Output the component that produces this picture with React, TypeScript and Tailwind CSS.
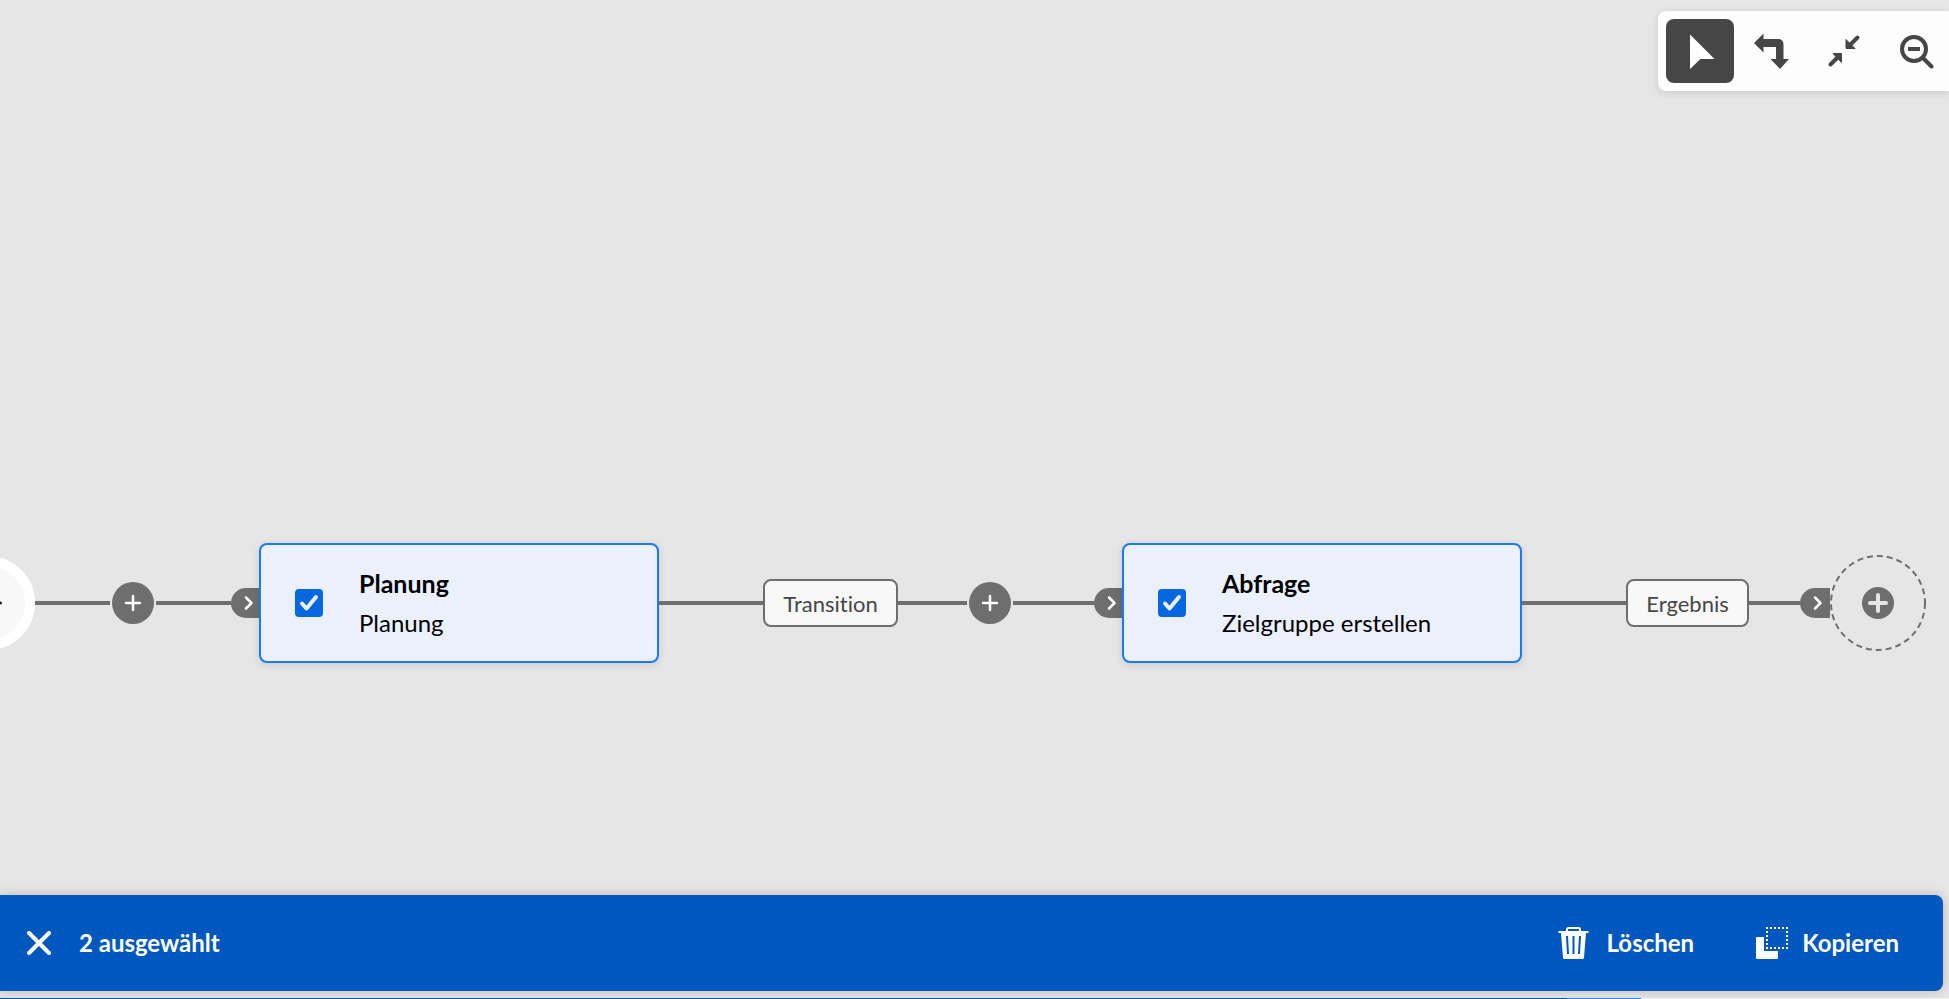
import type { ReactNode } from "react";

function Toolbar() {
  const tool = "flex h-16 w-[68px] shrink-0 items-center justify-center rounded-lg text-[#464646]";
  return (
    <div role="toolbar" aria-label="Arbeitsfläche" className="flex w-[291px] gap-1 self-end rounded-l-lg bg-[#fdfdfd] py-2 pl-2 shadow-[0_2px_8px_rgba(0,0,0,0.12)]">
      <button aria-label="Auswählen" aria-pressed="true" className="flex h-16 w-[68px] shrink-0 items-center justify-center rounded-lg bg-[#464646] text-white">
        <svg width="36" height="36" viewBox="0 0 36 36" fill="currentColor">
          <path d="M8 1.5V36L18.500 26H32.500Z" />
        </svg>
      </button>
      <button aria-label="Ausrichtung ändern" className={tool}>
        <svg width="36" height="36" viewBox="0 0 36 36" fill="currentColor">
          <path d="M0 10L9.500 0.500V6H24.500a5 5 0 0 1 5 5V26H35L26 36L16.500 26H22V14H9.500V19.500Z" />
        </svg>
      </button>
      <button aria-label="Einpassen" className={tool}>
        <svg width="36" height="36" viewBox="0 0 36 36" fill="currentColor" stroke="currentColor">
          <path d="M20 6.500V15.500H29Z M7 20.500H15.500V29.500Z" strokeWidth="1" strokeLinejoin="round" />
          <path d="M22 14L31.500 4.500M14 22L4.500 31.500" strokeWidth="4" strokeLinecap="round" />
        </svg>
      </button>
      <button aria-label="Verkleinern" className={tool}>
        <svg width="36" height="36" viewBox="0 0 36 36" fill="none" stroke="currentColor" strokeWidth="4">
          <circle cx="16" cy="16" r="12" />
          <path d="M10 16H22" />
          <path d="M25 25L33.500 33.500" strokeLinecap="round" />
        </svg>
      </button>
    </div>
  );
}

function Line({ className }: { className: string }) {
  return <span className={`h-1 shrink-0 bg-[#6e6e6e] ${className}`} />;
}

function AddButton() {
  return (
    <button aria-label="Aktivität hinzufügen" className="mx-0.5 flex size-[42px] shrink-0 items-center justify-center rounded-full bg-[#6e6e6e] text-white">
      <svg width="18" height="18" viewBox="0 0 18 18" stroke="currentColor" strokeWidth="2.5" strokeLinecap="round">
        <path d="M9 2V16M2 9H16" />
      </svg>
    </button>
  );
}

function Port({ className }: { className: string }) {
  return (
    <span className={`flex h-[30px] shrink-0 items-center justify-end rounded-l-full bg-[#6e6e6e] text-white ${className}`}>
      <svg width="10" height="16" viewBox="0 0 10 16" fill="none" stroke="currentColor" strokeWidth="2.500" strokeLinecap="round" strokeLinejoin="round">
        <path d="M2 2.500L7.500 8L2 13.500" />
      </svg>
    </span>
  );
}

function Activity({ id, title, kind }: { id: string; title: string; kind: string }) {
  return (
    <label htmlFor={id} className="flex h-[120px] w-[400px] shrink-0 items-center gap-9 rounded-lg border-2 border-[#1a7af2] bg-[#eaf0fc] pl-[34px] shadow-[0_2px_8px_rgba(0,0,0,0.12)]">
      <span className="grid size-7 shrink-0">
        <input id={id} type="checkbox" defaultChecked className="peer col-start-1 row-start-1 size-7 appearance-none rounded bg-white ring-2 ring-[#6e6e6e] ring-inset checked:bg-[#0667e0] checked:ring-0" />
        <svg viewBox="0 0 28 28" className="pointer-events-none col-start-1 row-start-1 hidden size-7 peer-checked:block" fill="none" stroke="#eaf0fc" strokeWidth="4" strokeLinecap="round" strokeLinejoin="round">
          <path d="M7 14.500L11.500 19.500L21 8" />
        </svg>
      </span>
      <span className="flex flex-col leading-10 text-black">
        <strong className="text-[25px] leading-10 font-bold">{title}</strong>
        <span className="text-2xl leading-10">{kind}</span>
      </span>
    </label>
  );
}

function TransitionLabel({ className, children }: { className: string; children: ReactNode }) {
  return (
    <button className={`h-12 shrink-0 rounded-lg border-2 border-[#6e6e6e] bg-[#f8f8f8] text-[22px] text-[#464646] [font-variant-ligatures:none] ${className}`}>
      {children}
    </button>
  );
}

function Flow() {
  return (
    <div className="flex items-center">
      <span className="-ml-[59px] flex size-[94px] shrink-0 items-center justify-center rounded-full border-[10px] border-white bg-[#f8f8f8]">
        <svg width="28" height="28" viewBox="0 0 28 28" fill="none" stroke="#222222" strokeWidth="3" strokeLinecap="round">
          <path d="M4 14H26.500" />
        </svg>
      </span>
      <Line className="w-[75px]" />
      <AddButton />
      <Line className="w-[75px]" />
      <Port className="w-7 pr-[5px]" />
      <Activity id="planung" title="Planung" kind="Planung" />
      <Line className="w-[104px]" />
      <TransitionLabel className="w-[135px]">Transition</TransitionLabel>
      <Line className="w-[69px]" />
      <AddButton />
      <Line className="w-[81px]" />
      <Port className="w-7 pr-[5px]" />
      <Activity id="abfrage" title="Abfrage" kind="Zielgruppe erstellen" />
      <Line className="w-[104px]" />
      <TransitionLabel className="w-[123px]">Ergebnis</TransitionLabel>
      <Line className="w-[51px]" />
      <Port className="w-[30px] pr-[7px]" />
      <button aria-label="Aktivität am Ende hinzufügen" className="shrink-0">
        <svg width="96" height="96" viewBox="0 0 96 96">
          <circle cx="48" cy="48" r="47" fill="none" stroke="#6e6e6e" strokeWidth="2" strokeDasharray="6 4" />
          <circle cx="48" cy="48" r="16" fill="#6e6e6e" />
          <path d="M48 40V56M40 48H56" stroke="#e6e6e6" strokeWidth="4" strokeLinecap="round" />
        </svg>
      </button>
    </div>
  );
}

function ActionBar() {
  return (
    <footer className="mr-1.5 flex h-24 shrink-0 items-center rounded-r-lg bg-[#0057be] pr-11 pl-[27px] text-2xl font-bold text-white shadow-[0_0_12px_rgba(0,0,0,0.2)]">
      <button aria-label="Auswahl aufheben">
        <svg width="24" height="24" viewBox="0 0 24 24" stroke="currentColor" strokeWidth="4" strokeLinecap="round">
          <path d="M2 2L22 22M22 2L2 22" />
        </svg>
      </button>
      <span className="ml-7">2 ausgewählt</span>
      <button className="ml-auto flex items-center gap-[17px]">
        <svg width="32" height="32" viewBox="0 0 32 32" fill="none" stroke="currentColor">
          <path d="M9 5V2.500a1.500 1.500 0 0 1 1.500-1.500H20.500a1.500 1.500 0 0 1 1.500 1.500V5" strokeWidth="2" />
          <path fillRule="evenodd" fill="currentColor" stroke="none" d="M0.500 4H30.500V6H28L26 30.500a1.500 1.500 0 0 1-1.500 1.500H6.500A1.500 1.500 0 0 1 5 30.500L3 6H0.500ZM8 9L9 27H11L10 9ZM14.500 9V27H16.500V9ZM21 9L20 27H22L23 9Z" />
        </svg>
        Löschen
      </button>
      <button className="ml-[62px] flex items-center gap-[14px]">
        <svg width="32" height="32" viewBox="0 0 32 32" fill="currentColor">
          <path d="M0 11a1 1 0 0 1 1-1H8V24H22V31a1 1 0 0 1-1 1H1a1 1 0 0 1-1-1Z" />
          <path d="M10 1H32M10 21H32" fill="none" stroke="currentColor" strokeWidth="2" strokeDasharray="2 2" />
          <path d="M11 4V20M31 4V20" fill="none" stroke="currentColor" strokeWidth="2" strokeDasharray="2 2" />
        </svg>
        Kopieren
      </button>
    </footer>
  );
}

export default function App() {
  return (
    <main className="flex h-screen flex-col overflow-hidden bg-[#e6e6e6] pt-[11px] font-[Lato,sans-serif]">
      <Toolbar />
      <section aria-label="Workflow" className="flex flex-1 flex-col justify-center pt-[220px]">
        <Flow />
      </section>
      <ActionBar />
      <div className="mt-[7px] flex h-px shrink-0">
        <span className="w-[1567px] bg-[#0057be]" />
        <span className="w-[74px] bg-[#1a8cff]" />
        <span className="flex-1 bg-[#f0f0f0]" />
      </div>
    </main>
  );
}
